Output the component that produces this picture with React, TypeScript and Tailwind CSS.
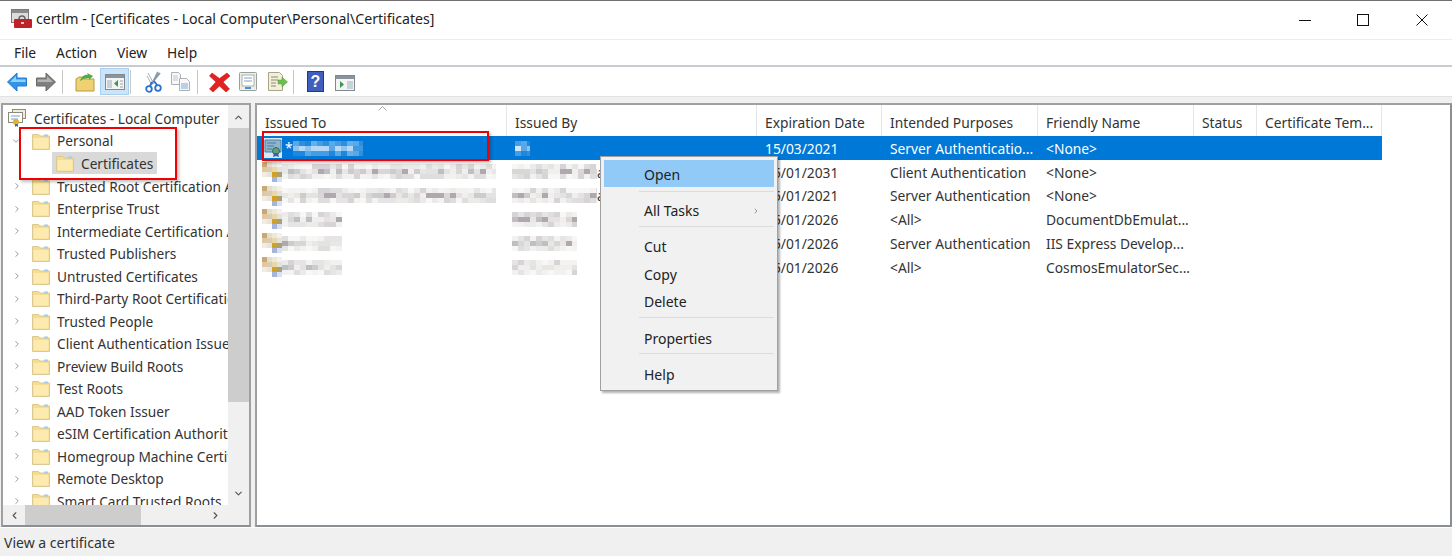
import React from "react";
import { ChevronRight, ChevronDown, ChevronUp, ChevronLeft } from "lucide-react";

const FONT = "font-['Noto_Sans',sans-serif]";

const treeItems = [
  "Trusted Root Certification Authorities",
  "Enterprise Trust",
  "Intermediate Certification Authorities",
  "Trusted Publishers",
  "Untrusted Certificates",
  "Third-Party Root Certification Authorities",
  "Trusted People",
  "Client Authentication Issuers",
  "Preview Build Roots",
  "Test Roots",
  "AAD Token Issuer",
  "eSIM Certification Authorities",
  "Homegroup Machine Certificates",
  "Remote Desktop",
  "Smart Card Trusted Roots",
];

const columns = [
  { label: "Issued To", w: "w-[250px]" },
  { label: "Issued By", w: "w-[250px]" },
  { label: "Expiration Date", w: "w-[125px]" },
  { label: "Intended Purposes", w: "w-[156px]" },
  { label: "Friendly Name", w: "w-[156px]" },
  { label: "Status", w: "w-[63px]" },
  { label: "Certificate Tem...", w: "w-[125px]" },
];

const rows = [
  { date: "15/01/2031", purpose: "Client Authentication", name: "<None>", toW: 234, byW: 85 },
  { date: "15/01/2021", purpose: "Server Authentication", name: "<None>", toW: 234, byW: 85 },
  { date: "15/01/2026", purpose: "<All>", name: "DocumentDbEmulat...", toW: 80, byW: 65 },
  { date: "15/01/2026", purpose: "Server Authentication", name: "IIS Express Develop...", toW: 80, byW: 65 },
  { date: "15/01/2026", purpose: "<All>", name: "CosmosEmulatorSec...", toW: 80, byW: 65 },
];

const menuGroups = [
  { items: ["Open"], cls: "" },
  { items: ["All Tasks"], cls: "mt-[4px] pt-[4px] pb-[2.500px]" },
  { items: ["Cut", "Copy", "Delete"], cls: "pt-[5px] pb-[2.500px]" },
  { items: ["Properties"], cls: "pt-[6px] pb-[1px]" },
  { items: ["Help"], cls: "pt-[6px] pb-[2px]" },
];

function Folder() {
  return (
    <svg width="18" height="17" viewBox="0 0 18 17" className="shrink-0">
      <path d="M.5 16.500V1.500h6l1.500 1.500h9.500v13.500z" fill="#f6dc8e" stroke="#dcc892" />
      <path d="M1.500 15.500V5h15v10.500z" fill="#fdeaae" />
      <rect x="12" y="1.500" width="4" height="2" fill="#a8cbe8" />
    </svg>
  );
}

// pixelated censor block, seeded so every render gives the same squares
function Pixels({ width, seed, dark = false }: { width: number; seed: number; dark?: boolean }) {
  const cells: React.ReactNode[] = [];
  const shades = dark
    ? ["#5aa6e6", "#8cc2ef", "#b4d8f5", "#cfe5f8", "#3f98e2"]
    : ["#f0efee", "#e4e3e2", "#d8d7d6", "#cdcccd", "#bfbec0", "#e9e7e4", "#b0a8ae"];
  let r = seed * 7919 + 13;
  for (let y = 0; y < 3; y++) {
    for (let x = 0; x < Math.ceil(width / 6); x++) {
      r = (r * 1103515245 + 12345) % 2147483648;
      const pick = (r >> 8) % shades.length;
      cells.push(
        <rect key={`${x}-${y}`} x={x * 6} y={y * 5} width="6" height="5" fill={shades[pick]} opacity={y === 1 ? 1 : 0.5} />
      );
    }
  }
  return (
    <svg width={width} height="15" className="shrink-0">
      {cells}
    </svg>
  );
}

function CertPixels() {
  const colours = [
    ["#c9a878", "#e8dcc4", "#eee8dc", "#f4f1ea"],
    ["#e0c9a0", "#d8ccb4", "#e6d8a8", "#e2e2e0"],
    ["#f0ece4", "#e8e4dc", "#d0a028", "#a8a078"],
    ["#ffffff", "#ffffff", "#a4b4dc", "#d8e0f4"],
  ];
  return (
    <svg width="20" height="20" className="shrink-0">
      {colours.map((line, y) => line.map((c, x) => <rect key={`${x}-${y}`} x={x * 5} y={y * 5} width="5" height="5" fill={c} />))}
    </svg>
  );
}

function SelectedCertIcon() {
  return (
    <svg width="18" height="20" viewBox="0 0 18 20" className="shrink-0">
      <rect width="18" height="20" fill="#d8e8f4" />
      <path d="M1 2h16v12H1z" fill="#8fb4cc" stroke="#4f7f9f" />
      <path d="M3 5h9M3 8h7M3 11h5" stroke="#3f7fa8" />
      <circle cx="12" cy="13" r="3.500" fill="#5f9f7f" stroke="#2f6f5f" />
      <path d="M10 15l-1 4 3-1 3 1-1-4" fill="#2f62b0" />
    </svg>
  );
}

function Toolbar() {
  return (
    <div className="flex h-[30px] items-center border-b border-[#e2e2e2] pl-[7px]">
      <svg width="20" height="20" viewBox="0 0 20 20" className="shrink-0">
        <path d="M.5 10L10 1v5h9.500v8H10v5z" fill="#2f95ea" stroke="#2a78c8" />
        <path d="M3 10l6-6v3.500h9.500V10z" fill="#8fd4fa" />
      </svg>
      <svg width="20" height="20" viewBox="0 0 20 20" className="ml-[9px] shrink-0">
        <path d="M19.500 10L10 1v5H.5v8H10v5z" fill="#7f7f7f" stroke="#6a6a6a" />
        <path d="M17 10l-6-6v3.500H1.500V10z" fill="#b4b4b4" />
      </svg>
      <div className="ml-[6px] h-[24px] w-px shrink-0 bg-[#c8c8c8]" />
      <svg width="20" height="20" viewBox="0 0 20 20" className="ml-[12px] shrink-0">
        <path d="M1 19V7l3-2h4l1 2h10v12z" fill="#f0d070" stroke="#b89a48" />
        <path d="M5 9c1-4 5-7 8-6l-1-2 6 3-4 4V6c-3 0-6 1-9 3z" fill="#4caf3f" />
      </svg>
      <div className="ml-[5px] flex h-[27px] w-[29px] shrink-0 items-center justify-center border border-[#a8d0f0] bg-[#cce4f7]">
        <svg width="20" height="18" viewBox="0 0 20 18">
          <rect x=".5" y="1.500" width="19" height="15" fill="#f4f4f4" stroke="#7f8a90" />
          <rect x="1" y="2" width="18" height="3" fill="#8a949c" />
          <rect x="2" y="7" width="5" height="8" fill="#c8d0d8" />
          <path d="M13 7v7l-4-3.500z" fill="#2f9f4f" />
          <path d="M15 8h3M15 11h3M15 14h3" stroke="#9aa4ac" />
        </svg>
      </div>
      <div className="ml-px h-[24px] w-px shrink-0 bg-[#c8c8c8]" />
      <svg width="17" height="22" viewBox="0 0 17 22" className="ml-[14px] shrink-0">
        <path d="M13 1L7 13M15 2L6 13" stroke="#8a9aa8" strokeWidth="1.800" />
        <path d="M3 2l6 11M2 5l5 9" stroke="#8a9aa8" strokeWidth=".8" />
        <circle cx="4" cy="18" r="2.800" fill="none" stroke="#2a70d0" strokeWidth="1.800" />
        <circle cx="13" cy="17" r="2.800" fill="none" stroke="#2a70d0" strokeWidth="1.800" />
        <path d="M5 15l2-4M12 14L9 10" stroke="#2a70d0" strokeWidth="1.800" />
      </svg>
      <svg width="21" height="21" viewBox="0 0 21 21" className="ml-[8px] shrink-0">
        <path d="M1.500 1.500h7l2 2v10h-9z" fill="#f8f8f8" stroke="#a8b0b8" />
        <path d="M9.500 7.500h7l3 3v9h-10z" fill="#f8f8f8" stroke="#a8b0b8" />
        <path d="M11 13h7M11 15h7M11 17h7" stroke="#7fa8d0" />
        <path d="M3 5h5M3 7h5M3 9h5" stroke="#c0c8d0" />
      </svg>
      <div className="ml-[6px] h-[24px] w-px shrink-0 bg-[#c8c8c8]" />
      <svg width="21" height="20" viewBox="0 0 21 20" className="ml-[11px] shrink-0">
        <path d="M3 1l7.500 5.500L18 1l3 3-7 6 6.500 7-3.500 3-6.500-6L4 20 .5 17 7 10 .5 4z" fill="#e22222" stroke="#c41a1a" strokeWidth=".6" />
      </svg>
      <svg width="20" height="21" viewBox="0 0 20 21" className="ml-[8px] shrink-0">
        <rect x="1.500" y="1.500" width="17" height="18" rx="1" fill="#efefe8" stroke="#9aa09a" />
        <rect x="4" y="4" width="12" height="11" fill="#fff" stroke="#a8b0b0" />
        <path d="M6 7h8M6 10h8" stroke="#7fa0c0" />
        <rect x="7" y="16" width="6" height="2" fill="#4a90d0" />
      </svg>
      <svg width="21" height="21" viewBox="0 0 21 21" className="ml-[9px] shrink-0">
        <path d="M1.500 1.500h11l3 3v15h-14z" fill="#f4f0d8" stroke="#a8a488" />
        <path d="M4 6h7M4 9h7M4 12h5M4 15h5" stroke="#8a8a7a" />
        <path d="M11 9h4V6l5.500 5-5.500 5v-3h-4z" fill="#6fbf4f" stroke="#4f9f3f" strokeWidth=".5" />
      </svg>
      <div className="ml-[5px] h-[24px] w-px shrink-0 bg-[#c8c8c8]" />
      <svg width="17" height="21" viewBox="0 0 17 21" className="ml-[13px] shrink-0">
        <rect width="17" height="21" fill="#22368f" />
        <rect x="1" y="1" width="15" height="19" fill="#3f5fbf" />
        <text x="8.500" y="16" textAnchor="middle" fontSize="16" fontWeight="700" fill="#fff" fontFamily="Liberation Sans">?</text>
      </svg>
      <svg width="20" height="18" viewBox="0 0 20 18" className="ml-[11px] mt-[3px] shrink-0">
        <rect x=".5" y="1.500" width="19" height="15" fill="#f4f4f4" stroke="#7f8a90" />
        <rect x="1" y="2" width="18" height="3" fill="#8a949c" />
        <path d="M5 7v7l4-3.500z" fill="#2f9f4f" />
        <rect x="12" y="7" width="6" height="8" fill="#c8d0d8" />
      </svg>
    </div>
  );
}

function Tree() {
  return (
    <div className="flex h-[424px] w-[250px] shrink-0 flex-col border-2 border-[#a0a0a0] border-b-[#8a8f94] bg-white text-[13.700px] text-[#333]">
      <div className="flex min-h-0 flex-1">
        <div className="min-w-0 flex-1 overflow-hidden pl-[4px]">
          <div className="flex h-[25px] items-center whitespace-nowrap pt-[1px]">
            <svg width="20" height="20" viewBox="0 0 20 20" className="shrink-0">
              <rect x="5.500" y="1.500" width="13" height="9" fill="#f2ecdc" stroke="#9a8a6a" />
              <rect x="1.500" y="4.500" width="14" height="10" fill="#fff" stroke="#8a8a80" />
              <path d="M4 8h9M4 11h7" stroke="#7fa0c0" />
              <circle cx="9" cy="14" r="3" fill="#e0b030" />
              <path d="M8 16v3l1.500-1 1.500 1v-3" fill="#3f6fc0" />
            </svg>
            <span className="ml-[7px] pt-[2px]">Certificates - Local Computer</span>
          </div>
          <div className="flex h-[22px] items-center whitespace-nowrap pl-[4px]">
            <ChevronDown size={10} className="shrink-0 text-[#888]" />
            <div className="ml-[11px]"><Folder /></div>
            <span className="ml-[7px] pt-[1px]">Personal</span>
          </div>
          <div className="ml-[45px] flex h-[22px] w-[105px] items-center gap-[7px] whitespace-nowrap bg-[#d9d9d9] pl-[4px]">
            <Folder />
            <span className="pt-[2px]">Certificates</span>
          </div>
          <div className="mt-[1px]">
            {treeItems.map((t) => (
              <div key={t} className="flex h-[22.500px] items-center whitespace-nowrap pl-[5px]">
                <ChevronRight size={10} className="shrink-0 text-[#888]" />
                <div className="ml-[10px]"><Folder /></div>
                <span className="ml-[7px] pt-[2px]">{t}</span>
              </div>
            ))}
          </div>
        </div>
        <div className="flex w-[21px] shrink-0 flex-col items-center bg-[#f0f0f0]">
          <div className="flex h-[23px] items-center pt-[2px]"><ChevronUp size={11} strokeWidth={2.500} className="text-[#555]" /></div>
          <div className="h-[274px] w-full bg-[#cdcdcd]" />
          <div className="flex-1" />
          <div className="mb-[3px] flex h-[18px] items-center"><ChevronDown size={11} strokeWidth={2.500} className="text-[#555]" /></div>
        </div>
      </div>
      <div className="flex h-[20px] shrink-0 items-center bg-[#f0f0f0]">
        <div className="flex w-[22px] justify-center"><ChevronLeft size={11} strokeWidth={2.500} className="text-[#555]" /></div>
        <div className="h-full w-[116px] bg-[#cdcdcd]" />
        <div className="flex-1" />
        <div className="flex w-[26px] justify-center"><ChevronRight size={11} strokeWidth={2.500} className="text-[#555]" /></div>
        <div className="w-[21px]" />
      </div>
    </div>
  );
}

function ContextMenu() {
  return (
    <div className="absolute left-[343px] top-[51px] w-[178px] border border-[#a0a0a0] bg-[#f1f1f1] pb-[1px] pl-[3px] pr-[3px] pt-[3px] text-[14px] text-[#222] shadow-[2px_2px_2px_rgba(0,0,0,0.3)]">
      {menuGroups.map((group, i) => (
        <div key={i} className={i > 0 ? `ml-[35px] border-t border-[#dcdcdc] ${group.cls}` : ""}>
          {group.items.map((item) => (
            <div
              key={item}
              className={
                item === "Open"
                  ? "flex h-[27px] items-center bg-[#91c9f7] pl-[40px] pt-[2px]"
                  : "flex h-[27.500px] items-center pl-[5px] pt-[2px]"
              }
            >
              {item}
              {item === "All Tasks" && <ChevronRight size={8} className="ml-auto mr-[14px] text-[#666]" />}
            </div>
          ))}
        </div>
      ))}
    </div>
  );
}

function List() {
  return (
    <div className="relative h-[424px] min-w-0 flex-1 border-2 border-[#a0a0a0] border-b-[#8a8f94] border-r-[#8a8f94] bg-white text-[13.800px] text-[#333]">
      <svg width="9" height="5" viewBox="0 0 9 5" className="absolute left-[121px] top-[1px]">
        <path d="M.5 4.500l4-4 4 4" fill="none" stroke="#a8a8a8" />
      </svg>
      <div className="flex h-[31px]">
        {columns.map((c) => (
          <div key={c.label} className={`${c.w} flex items-center whitespace-nowrap border-r border-[#e5e5e5] pl-[8px] pt-[5px]`}>
            {c.label}
          </div>
        ))}
      </div>
      <div className="flex h-[24px] w-[1125px] items-center bg-[#0078d7] text-white">
        <div className="flex w-[250px] items-center pl-[7px]">
          <SelectedCertIcon />
          <span className="ml-[3px]">*</span>
          <Pixels width={70} seed={3} dark />
        </div>
        <div className="w-[250px] pl-[8px]"><Pixels width={15} seed={5} dark /></div>
        <div className="w-[125px] pl-[8px] pt-[2px]">15/03/2021</div>
        <div className="w-[156px] whitespace-nowrap pl-[8px] pt-[2px]">Server Authenticatio...</div>
        <div className="pl-[8px] pt-[2px]">&lt;None&gt;</div>
      </div>
      {rows.map((r, i) => (
        <div key={i} className="flex h-[23.800px] items-center">
          <div className="flex w-[250px] items-center overflow-hidden pl-[5px]">
            <CertPixels />
            <Pixels width={r.toW - 20} seed={i + 11} />
          </div>
          <div className="flex w-[250px] items-center pl-[5px]">
            <Pixels width={r.byW} seed={i + 31} />
            {i < 2 && <span className="pt-[2px]">a</span>}
          </div>
          <div className="w-[125px] pl-[8px] pt-[2px]">{r.date}</div>
          <div className="w-[156px] whitespace-nowrap pl-[8px] pt-[2px]">{r.purpose}</div>
          <div className="whitespace-nowrap pl-[8px] pt-[2px]">{r.name}</div>
        </div>
      ))}
      <ContextMenu />
      {/* red annotation box */}
      <div className="absolute left-[5px] top-[26px] h-[30px] w-[227px] border-2 border-[#f00000] shadow-[2px_2px_3px_rgba(0,0,0,0.25)]" />
    </div>
  );
}

export default function App() {
  return (
    <div className={`${FONT} relative h-[556px] w-[1452px] overflow-hidden bg-white text-[#222]`}>
      <div className="flex h-[40px] items-center border-t border-[#707070] border-b border-b-[#ececec] pb-[2px] pl-[11px] text-[14.150px]">
        <svg width="21" height="20" viewBox="0 0 21 20" className="shrink-0">
          <rect x=".5" y=".5" width="17" height="13" fill="#dcdcdc" stroke="#7a7a7a" />
          <rect x="1" y="1" width="16" height="3" fill="#8a8a8a" />
          <rect x="3" y="10" width="18" height="9" rx="1" fill="#c02028" />
          <path d="M8 10c0-4 6-4 6 0" fill="none" stroke="#666" strokeWidth="1.500" />
          <rect x="10" y="13" width="3" height="2" fill="#f0d0c0" />
        </svg>
        <span className="ml-[4px]">certlm - [Certificates - Local Computer\Personal\Certificates]</span>
        <div className="ml-auto flex items-center pt-[2px]">
          <svg width="12" height="12" viewBox="0 0 12 12"><path d="M0 6.500h12" stroke="#111" /></svg>
          <svg width="12" height="12" viewBox="0 0 12 12" className="ml-[46px]"><rect x=".5" y=".5" width="11" height="11" fill="none" stroke="#111" /></svg>
          <svg width="12" height="12" viewBox="0 0 12 12" className="ml-[47px] mr-[24px]"><path d="M.5.500l11 11M11.500.500l-11 11" stroke="#111" /></svg>
        </div>
      </div>
      <div className="flex h-[27px] items-center gap-[20px] border-b-2 border-[#c8cbd0] pl-[14px] pt-[2px] text-[13.800px]">
        <span>File</span><span>Action</span><span>View</span><span>Help</span>
      </div>
      <Toolbar />
      <div className="flex gap-[4px] bg-[#f0f0f0] pl-[1px] pt-[6px]">
        <Tree />
        <List />
      </div>
      <div className="flex h-[29px] items-center border-t border-[#fff] bg-[#f0f0f0] pl-[4px] text-[14px] text-[#333]">View a certificate</div>
      {/* red annotation box over the tree */}
      <div className="absolute left-[19px] top-[127px] h-[53px] w-[158px] border-2 border-[#f00000] shadow-[2px_2px_3px_rgba(0,0,0,0.25)]" />
    </div>
  );
}
